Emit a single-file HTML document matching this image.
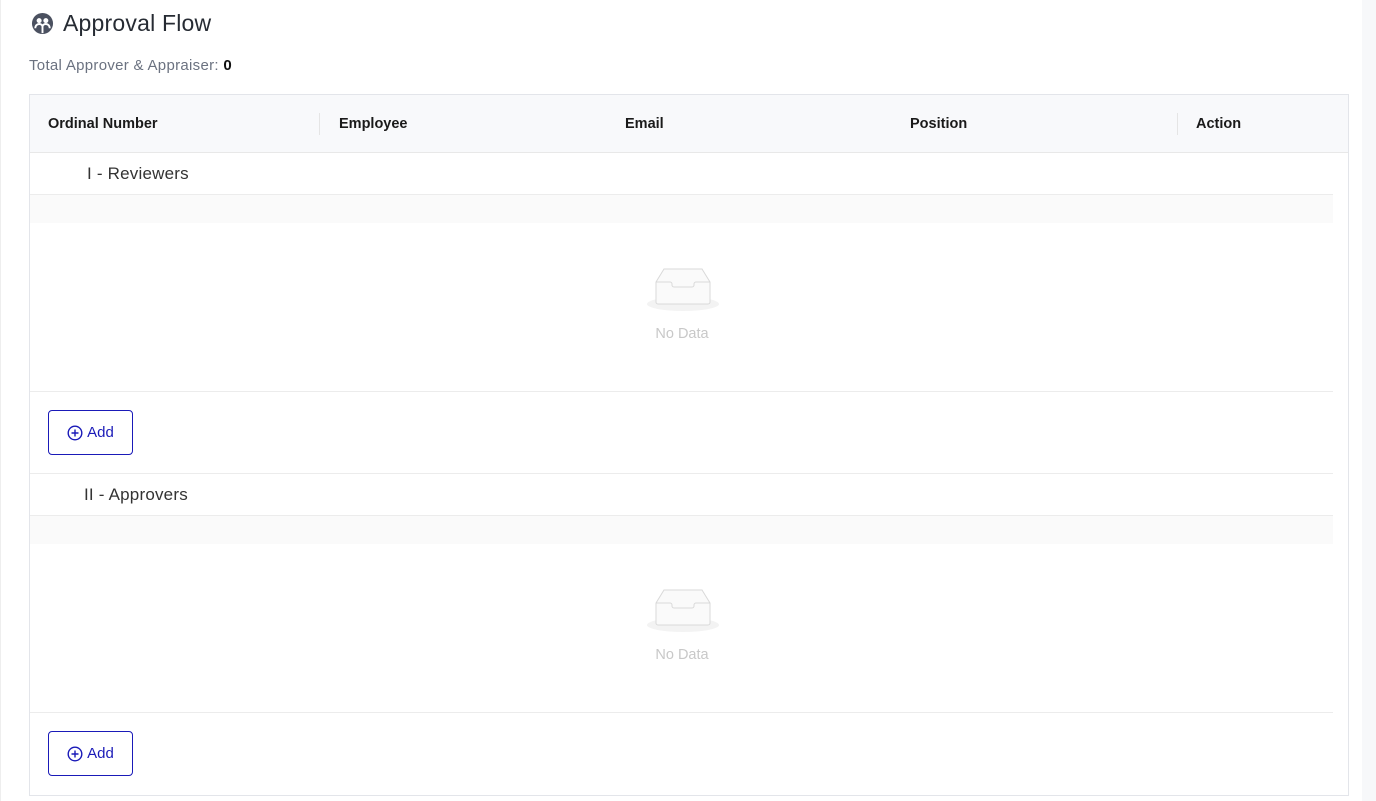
<!DOCTYPE html>
<html><head><style>
*{box-sizing:border-box;margin:0;padding:0}
body{width:1376px;height:801px;background:#fff;font-family:"Liberation Sans",sans-serif;position:relative;overflow:hidden;color:#262626}
.abs{position:absolute}
.side{left:1362px;top:0;width:14px;height:801px;background:#f7f8fa}
.lborder{left:0;top:0;width:1px;height:801px;background:#eee}
.title{left:63px;top:10px;font-size:23px;color:#262b33;letter-spacing:0.2px}
.sub{left:29px;top:57px;font-size:15px;color:#6b7280;letter-spacing:0.3px}
.sub b{color:#111}
.table{left:29px;top:94px;width:1320px;height:702px;border:1px solid #e3e5ea}
.head{left:0;top:0;width:1318px;height:58px;background:#f8f9fb;border-bottom:1px solid #e8e8e8}
.th{top:21px;font-size:14.5px;font-weight:bold;color:#1a1a1a}
.group{font-size:17px;color:#333;letter-spacing:0.2px}
.line{height:1px;background:#ececec;width:1303px;left:0}
.strip{left:0;width:1303px;height:28px;background:#fafafa}
.nd{font-size:14.5px;color:#c8c8c8;width:100px;text-align:center}
.btn{width:85px;height:45px;border:1px solid #1a1ab8;border-radius:4px;color:#1a1ab8;font-size:15px;display:flex;align-items:center;justify-content:center;gap:4px;background:#fff}
</style></head><body>
<div class="abs lborder"></div>
<div class="abs side"></div>
<svg class="abs" style="left:31px;top:12px" width="23" height="23" viewBox="0 0 24 24"><circle cx="12" cy="12" r="11" fill="#4b5160"/><circle cx="8.5" cy="9" r="2.6" fill="#fff"/><circle cx="15.5" cy="9" r="2.6" fill="#fff"/><path d="M4.5 17c0-3 2-4.5 4-4.5s3.5 1 3.5 3M19.5 17c0-3-2-4.5-4-4.5s-3.5 1-3.5 3M12 15v7" stroke="#fff" stroke-width="2" fill="none"/></svg>
<div class="abs title">Approval Flow</div>
<div class="abs sub">Total Approver &amp; Appraiser: <b>0</b></div>
<div class="abs table">
 <div class="abs head">
  <div class="abs th" style="left:18px">Ordinal Number</div>
  <div class="abs" style="left:289px;top:18px;width:1px;height:22px;background:#e5e5e5"></div>
  <div class="abs th" style="left:309px">Employee</div>
  <div class="abs th" style="left:595px">Email</div>
  <div class="abs th" style="left:880px">Position</div>
  <div class="abs" style="left:1147px;top:18px;width:1px;height:22px;background:#e5e5e5"></div>
  <div class="abs th" style="left:1166px">Action</div>
 </div>
 <div class="abs group" style="left:57px;top:69px">I - Reviewers</div>
 <div class="abs line" style="top:99px"></div>
 <div class="abs strip" style="top:100px"></div>
 <svg class="abs" style="left:616px;top:171px" width="74" height="48" viewBox="0 0 74 48"><ellipse cx="37" cy="38" rx="36" ry="7" fill="#f3f3f3"/><path d="M10 16 L18 3 H56 L64 16 V36 a2 2 0 0 1-2 2 H12 a2 2 0 0 1-2-2Z" fill="#fafafa" stroke="#d9d9d9"/><path d="M10 16 H24 a2 2 0 0 1 2 2 V19 a2 2 0 0 0 2 2 H46 a2 2 0 0 0 2-2 V18 a2 2 0 0 1 2-2 H64" fill="none" stroke="#d9d9d9"/></svg>
 <div class="abs nd" style="left:602px;top:231px">No Data</div>
 <div class="abs line" style="top:296px"></div>
 <div class="abs btn" style="left:18px;top:315px"><svg width="16" height="16" viewBox="0 0 16 16"><circle cx="8" cy="8" r="6.8" fill="none" stroke="#1a1ab8" stroke-width="1.4"/><path d="M8 4.5v7M4.5 8h7" stroke="#1a1ab8" stroke-width="1.4"/></svg>Add</div>
 <div class="abs line" style="top:378px"></div>
 <div class="abs group" style="left:54px;top:390px">II - Approvers</div>
 <div class="abs line" style="top:420px"></div>
 <div class="abs strip" style="top:421px"></div>
 <svg class="abs" style="left:616px;top:492px" width="74" height="48" viewBox="0 0 74 48"><ellipse cx="37" cy="38" rx="36" ry="7" fill="#f3f3f3"/><path d="M10 16 L18 3 H56 L64 16 V36 a2 2 0 0 1-2 2 H12 a2 2 0 0 1-2-2Z" fill="#fafafa" stroke="#d9d9d9"/><path d="M10 16 H24 a2 2 0 0 1 2 2 V19 a2 2 0 0 0 2 2 H46 a2 2 0 0 0 2-2 V18 a2 2 0 0 1 2-2 H64" fill="none" stroke="#d9d9d9"/></svg>
 <div class="abs nd" style="left:602px;top:552px">No Data</div>
 <div class="abs line" style="top:617px"></div>
 <div class="abs btn" style="left:18px;top:636px"><svg width="16" height="16" viewBox="0 0 16 16"><circle cx="8" cy="8" r="6.8" fill="none" stroke="#1a1ab8" stroke-width="1.4"/><path d="M8 4.5v7M4.5 8h7" stroke="#1a1ab8" stroke-width="1.4"/></svg>Add</div>
</div>
</body></html>
